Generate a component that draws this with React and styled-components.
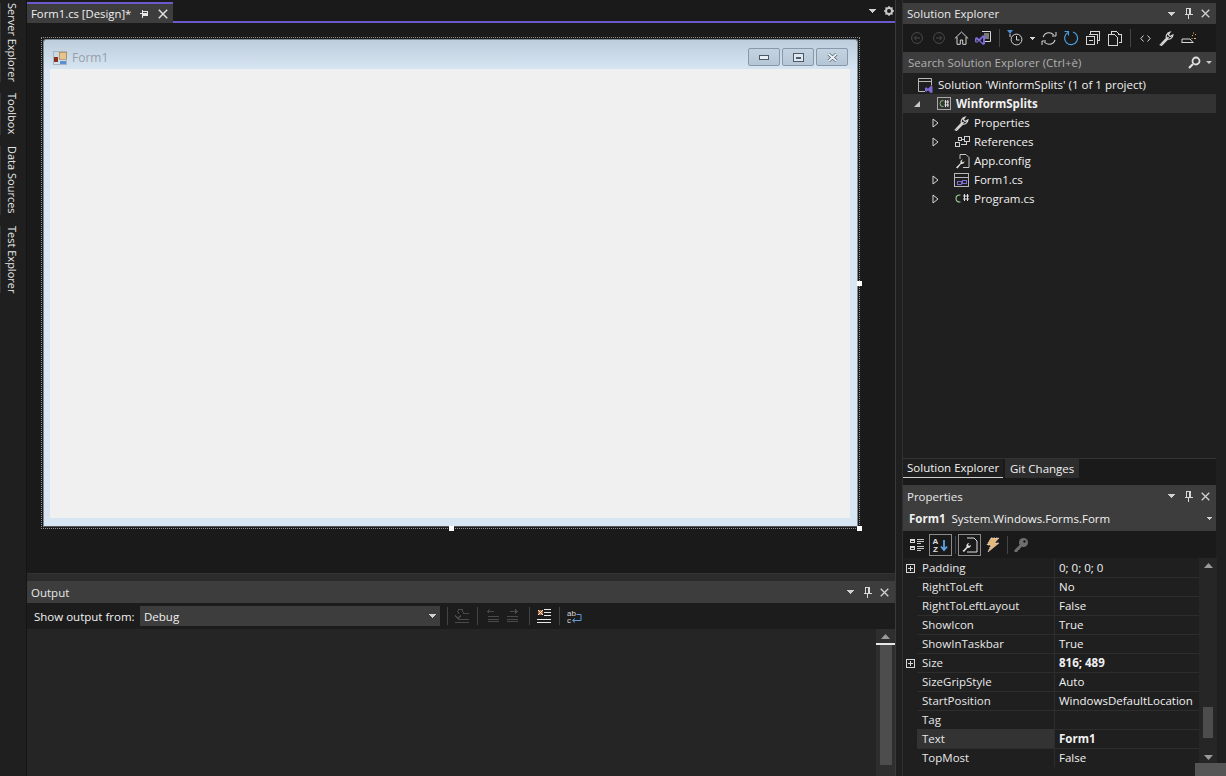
import React from "react";
import styled, { createGlobalStyle } from "styled-components";

const Global = createGlobalStyle`
  html, body { margin: 0; padding: 0; background: #1f1f1f; overflow: hidden; }
  * { box-sizing: border-box; }
`;

const Page = styled.div`
  width: 1226px; height: 776px; display: flex; position: relative; overflow: hidden;
  background: #1f1f1f; color: #f1f1f1;
  font-family: "Open Sans", "Liberation Sans", sans-serif; font-size: 11.5px; line-height: 19px;
`;
const Rail = styled.div`
  width: 27px; flex: none; display: flex; flex-direction: column; gap: 11px; background: #1f1f1f; padding-top: 3px;
  border-right: 1px solid #141414;
`;
const RailTab = styled.div`
  writing-mode: vertical-rl; height: ${p => p.$h}px; width: 21px; padding-left: 2px; font-size: 11px; line-height: 18px;
  color: #e6e6e6; border-left: 1px solid #333; white-space: nowrap;
`;
const Center = styled.div`
  width: 869px; flex: none; display: flex; flex-direction: column; border-right: 1px solid #3a3a3a;
`;
const DocStrip = styled.div`
  height: 23px; flex: none; display: flex; background: #1a1a1a; padding-top: 2px;
`;
const DocTab = styled.div`
  width: 146px; height: 21px; background: #3d3d3d; border-top: 2px solid #6a5acd; display: flex; align-items: center;
  padding-left: 4px; font-size: 11.3px; color: #f1f1f1; gap: 9px; white-space: nowrap;
`;
const DocRest = styled.div`
  flex: 1; display: flex; justify-content: flex-end; align-items: center; gap: 8px; padding: 0 1px 2px 0; height: 21px;
  border-bottom: 2px solid #6a5acd;
`;
const Designer = styled.div`
  height: 551px; flex: none; background: #1a1a1a; padding: 14px 0 0 14px; border-bottom: 1px solid #333;
`;
const Selection = styled.div`
  position: relative; width: 819px; height: 492px; border: 1px dotted #909090; padding: 1px;
`;
const Handle = styled.span`
  position: absolute; width: 5px; height: 5px; background: #fff; left: ${p => p.$x}px; top: ${p => p.$y}px;
`;
const FormWin = styled.div`
  height: 100%; border-radius: 3px 3px 0 0; border: 1px solid #7a8894; border-bottom-color: #555; padding: 0 7px 8px 6px;
  background: linear-gradient(#bdcddc 0, #d8e6f3 30px, #d8e6f3 100%); display: flex; flex-direction: column;
`;
const TitleBar = styled.div`
  height: 29px; flex: none; display: flex; align-items: center; color: #96a0a9; font-size: 12px; gap: 5px; padding: 6px 0 0 3px;
`;
const WinBtns = styled.div`
  margin-left: auto; display: flex; gap: 2px; margin-right: 2px; margin-top: 2px; align-self: flex-start;
`;
const WinBtn = styled.div`
  width: 32px; height: 18px; border: 1px solid #8898a8; border-radius: 2px;
  background: linear-gradient(#c4d3e1, #b5c6d6); display: flex; align-items: center; justify-content: center;
`;
const Client = styled.div` flex: 1; background: #f0f0f0; `;

const Band = styled.div` height: 7px; flex: none; background: #2b2b2b; `;
const PanelHead = styled.div`
  height: ${p => p.$h || 22}px; flex: none; background: #3d3d3d; display: flex; align-items: center; padding: 0 6px 0 4px; font-size: 11.5px; color: #e8e8e8;
`;
const HeadTools = styled.div`
  margin-left: auto; display: flex; align-items: center; gap: 8px;
  & > :first-child { margin-right: 1px; }
`;
const OutBar = styled.div`
  height: 26px; flex: none; background: #1c1c1c; display: flex; align-items: center; padding-left: 7px; font-size: 11.5px;
`;
const OutLabel = styled.span` width: 106px; flex: none; white-space: nowrap; color: #f1f1f1; `;
const Combo = styled.div`
  width: 300px; height: 20px; flex: none; background: #3d3d3d; display: flex; align-items: center; justify-content: space-between; padding: 0 4px; color: #f1f1f1;
`;
const ToolGlyph = styled.span`
  width: ${p => p.$w || 22}px; height: 22px; flex: none; display: inline-flex; align-items: center; justify-content: center;
`;
const Sep = styled.span`
  width: ${p => p.$w || 8}px; flex: none; height: 18px; display: inline-flex; justify-content: center;
  &::before { content: ""; width: 1px; height: 100%; background: #444; }
`;
const OutBody = styled.div`
  flex: 1; background: #252525; display: flex; justify-content: flex-end; min-height: 0;
`;
const OutScroll = styled.div`
  width: 19px; background: #2e2e2e; display: flex; flex-direction: column; align-items: center; padding-top: 5px;
`;
const OutMark = styled.div` width: 19px; height: 2px; background: #e8e8e8; margin-top: 4px; `;
const OutThumb = styled.div` width: 12px; height: 120px; background: #4d4d4d; `;

const Right = styled.div`
  margin-left: 6px; width: 314px; flex: none; display: flex; flex-direction: column; padding-top: 3px; border-left: 1px solid #303030;
`;
const SeTools = styled.div`
  height: 28px; flex: none; background: #1a1a1a; display: flex; align-items: center; padding-left: 3px;
`;
const Search = styled.div`
  height: 21px; flex: none; background: #3d3d3d; display: flex; align-items: center; justify-content: space-between; padding: 0 3px 0 5px; color: #b0b0b0; font-size: 11.5px;
`;
const Tree = styled.div` flex: 1; padding-top: 2px; background: #1f1f1f; border-bottom: 1px solid #333; min-height: 0; `;
const TreeRow = styled.div`
  height: 19px; display: flex; align-items: center; padding-left: ${p => p.$pad}px; white-space: nowrap; color: #f1f1f1;
  background: ${p => p.$sel ? "#333333" : "transparent"}; font-weight: ${p => p.$sel ? 700 : 400};
`;
const Expander = styled.span`
  width: 18px; flex: none; display: inline-flex; justify-content: center; margin-right: 10px;
`;
const TreeIcon = styled.span`
  width: 16px; height: 16px; flex: none; margin-right: 4px; display: inline-flex; align-items: center; justify-content: center;
`;
const Tabs = styled.div` height: 26px; flex: none; display: flex; gap: 2px; background: #1a1a1a; align-items: flex-start; `;
const TabItem = styled.div`
  height: 19px; padding: 0 5px 1px 4px; font-size: 11.5px; display: flex; align-items: center; white-space: nowrap;
  width: ${p => p.$w}px; color: #f1f1f1; background: ${p => p.$on ? "#1f1f1f" : "#2d2d2d"};
  border-bottom: ${p => p.$on ? "1px solid #d0d0d0" : "none"};
  padding-left: ${p => p.$on ? 4 : 5}px;
`;
const PropSub = styled.div`
  height: 24px; flex: none; background: #3d3d3d; display: flex; align-items: center; justify-content: space-between; padding: 0 4px 2px 6px; white-space: nowrap; color: #f1f1f1;
  b { margin-right: 6px; }
`;
const PropTools = styled.div`
  height: 27px; flex: none; background: #1a1a1a; display: flex; align-items: center; padding-left: 3px;
`;
const PropBtn = styled.span`
  width: ${p => p.$w || 23}px; height: 22px; flex: none; display: inline-flex; align-items: center; justify-content: center;
  border: 1px solid ${p => p.$on ? "#8a8a8a" : "transparent"};
`;
const PropWrap = styled.div` display: flex; flex: none; height: 209px; `;
const PropGrid = styled.div` width: 296px; flex: none; `;
const PropRow = styled.div`
  height: 19px; display: grid; grid-template-columns: 14px 138px 1fr; background: #1f1f1f;
`;
const PropGutter = styled.span` display: flex; align-items: center; justify-content: center; background: #1f1f1f; `;
const PropName = styled.span`
  padding-left: 4px; padding-top: 1px; color: #e8e8e8; border-right: 1px solid #2d2d2d; border-bottom: 1px solid #2d2d2d; background: ${p => p.$hl ? "#333333" : "transparent"}; line-height: 18px; white-space: nowrap; text-indent: 1px;
`;
const PropVal = styled.span`
  padding-left: 4px; padding-top: 1px; color: #f1f1f1; font-weight: ${p => p.$b ? 700 : 400}; line-height: 18px; white-space: nowrap; overflow: hidden; border-bottom: 1px solid #2d2d2d;
`;
const PropScroll = styled.div`
  width: 18px; flex: none; background: #262626; display: flex; flex-direction: column; align-items: center; padding: 5px 0 7px;
`;
const PropThumb = styled.div` width: 10px; height: 31px; background: #4d4d4d; margin: auto 0 17px; `;
const Foot = styled.div` height: 9px; flex: none; background: #1f1f1f; `;
const Grip = styled.div`
  position: absolute; right: 0; bottom: 0; width: 31px; height: 13px; background: #555;
`;

const Svg = ({ w = 16, h = 16, children }) => (
  <svg width={w} height={h} viewBox={`0 0 ${w} ${h}`} fill="none" shapeRendering="crispEdges">{children}</svg>
);
const Arrow = ({ c = "#d0d0d0" }) => (
  <Svg w={7} h={4}><path d="M0 0h7v1H6v1H5v1H4v1H3V3H2V2H1V1H0z" fill={c} /></Svg>
);
const Pin = ({ c = "#d8d8d8" }) => (
  <Svg w={9} h={11}><path d="M2.5.5h4v6h-4zM.5 6.5h8M4.5 7v4" stroke={c} /><path d="M5 1h1v5H5z" fill={c} /></Svg>
);
const Close = ({ c = "#d0d0d0", s = 9 }) => (
  <svg width={s} height={s} viewBox="0 0 10 10"><path d="M.8.8l8.4 8.4M9.2.8L.8 9.2" stroke={c} strokeWidth="1.5" /></svg>
);
const HTools = () => (
  <HeadTools><Arrow /><Pin /><Close /></HeadTools>
);
const Tri = () => (
  <svg width="7" height="10" viewBox="0 0 7 10"><path d="M1 1l5 4-5 4z" stroke="#d8d8d8" fill="none" /></svg>
);
const TriOpen = () => (
  <svg width="8" height="8" viewBox="0 0 8 8"><path d="M7 1v6H1z" fill="#c8c8c8" /></svg>
);
const Plus = () => (
  <Svg w={9} h={9}><path d="M.5.5h8v8h-8zM2 4.5h5M4.5 2v5" stroke="#d8d8d8" /></Svg>
);
const FormIcon = () => (
  <Svg><path d="M.5 1.5h14v13H.5zM1 5h13" stroke="#b8b8b8" /><path d="M3.5 9.5h4v3h-4zM8.5 8.5h4v3h-4z" stroke="#7d6bd8" /></Svg>
);
const Wrench = ({ c = "#d8d8d8" }) => (
  <svg width="16" height="16" viewBox="0 0 16 16"><path d="M1.2 14.8l6.3-6.6c-.8-2 0-5.5 3.6-6.1L9.3 4.6l1.9 1.9 2.7-1.6c-.3 3.3-3 4.6-5.1 4.1l-6.2 6.4z" fill="none" stroke={c} strokeWidth="1.2" /><path d="M9 6.4l1 1-6.6 6.7-1-1z" fill={c} /></svg>
);
const Sharp = ({ x, c = "#e0e0e0" }) => (
  <path d={`M${x + 1.5} 1v7M${x + 4.500} 1v7M${x} 3h6M${x} 6h6`} stroke={c} />
);

const Dim = "#4a4a4a";
const Ic = "#d6d6d6";

const SeToolbar = () => (
  <SeTools>
    <ToolGlyph><svg width="12" height="12" viewBox="0 0 12 12"><circle cx="6" cy="6" r="5.4" stroke={Dim} fill="none" /><path d="M9 6H3.5M5.5 3.8L3.3 6l2.2 2.2" stroke={Dim} fill="none" /></svg></ToolGlyph>
    <ToolGlyph><svg width="12" height="12" viewBox="0 0 12 12"><circle cx="6" cy="6" r="5.4" stroke={Dim} fill="none" /><path d="M3 6h5.500M6.500 3.800L8.700 6 6.500 8.200" stroke={Dim} fill="none" /></svg></ToolGlyph>
    <ToolGlyph><svg width="15" height="14" viewBox="0 0 15 14"><path d="M.8 7.5L7.5 1l6.7 6.5M3 6v7.3h3.3V9h2.4v4.3H12V6" stroke={Ic} fill="none" /></svg></ToolGlyph>
    <ToolGlyph><svg width="18" height="16" viewBox="0 0 18 16"><path d="M8 1.5h8.5v10H11" stroke={Ic} fill="none" /><path d="M10 4h5M10 6h5M10 8h5" stroke={Ic} /><path d="M1 8l2-1 2 2 4-4 2 1v8l-2 1-4-4-2 2-2-1zM2.5 9.2v3l1.5-1.5zM9 7.5L6.3 10.7 9 13z" fill="#7d6bd8" fillRule="evenodd" /></svg></ToolGlyph>
    <Sep $w={10} />
    <ToolGlyph><svg width="16" height="16" viewBox="0 0 16 16"><path d="M0 0h6L3 4z" fill="#4a90d9" /><circle cx="9.5" cy="9.5" r="5.4" stroke={Ic} fill="none" /><path d="M9.5 6v4h3M3 4v3" stroke={Ic} fill="none" /></svg></ToolGlyph>
    <ToolGlyph $w={12}><Svg w={5} h={3}><path d="M0 0h5v1H4v1H3v1H2V2H1V1H0z" fill={Ic} /></Svg></ToolGlyph>
    <ToolGlyph><svg width="16" height="15" viewBox="0 0 16 15"><path d="M2.2 6.2C3 3.2 5.300 1.800 8 1.800c2 0 3.500.8 4.800 2.200M14 8.800c-.8 3-3.300 4.400-6 4.400-2 0-3.500-.8-4.800-2.200" stroke={Ic} fill="none" strokeWidth="1.1" /><path d="M15 1v4h-4M1 14v-4h4" stroke={Ic} fill="none" /></svg></ToolGlyph>
    <ToolGlyph><svg width="16" height="16" viewBox="0 0 16 16"><path d="M5 2.500A6.500 6.500 0 1 0 10 2" stroke="#4a9fe0" fill="none" strokeWidth="1.200" /><path d="M1.500 1.500H5.500V5.500" stroke="#4a9fe0" fill="none" strokeWidth="1.100" /></svg></ToolGlyph>
    <ToolGlyph><Svg w={14} h={14}><path d="M4.500 3.500v-3h9v9h-3M2.500 3.500h9v9" stroke={Ic} /><path d="M.5 5.500h8v8h-8zM2.500 9.500h4" stroke={Ic} /></Svg></ToolGlyph>
    <ToolGlyph><Svg w={14} h={15}><path d="M3.500 3.500v-3h5l2 2h-1M.5 3.500h6l3 3v8h-9z" stroke={Ic} /><path d="M10 3.500h3.500v8h-3" stroke={Ic} /></Svg></ToolGlyph>
    <Sep />
    <ToolGlyph><svg width="11" height="7" viewBox="0 0 11 7"><path d="M3.500 .5L.8 3.500l2.700 3M7.500 .5l2.700 3-2.700 3" stroke={Ic} fill="none" /></svg></ToolGlyph>
    <ToolGlyph><Wrench /></ToolGlyph>
    <ToolGlyph><svg width="16" height="12" viewBox="0 0 16 12"><path d="M.5 10.500h12M1 10V7h8l3 3.500" stroke={Ic} fill="none" /><path d="M11 3h1v1h-1zM14 2h1v1h-1zM13 6h2v1h-2zM10.500 6h1v1h-1zM12 .5h1v1h-1z" fill="#e4b070" /></svg></ToolGlyph>
  </SeTools>
);

const OutputTools = () => (
  <>
    <Sep $w={14} />
    <ToolGlyph $w={16}><Svg w={14} h={14}><path d="M3 4.500V2.500q0-2 2-2h1q2 0 2 2v1M0 6.500L3 9.500 6 6.500M8 4.500h6M3 10.500h12M0 13.500h14" stroke={Dim} /></Svg></ToolGlyph>
    <Sep $w={14} />
    <ToolGlyph $w={18}><Svg w={14} h={14}><path d="M1 2.500h7M3.500 .5l-2 2 2 2M2 7.500h11M2 10h11M2 12.500h11" stroke={Dim} /></Svg></ToolGlyph>
    <ToolGlyph $w={20}><Svg w={14} h={14}><path d="M5 2.500h7M10 .5l2 2-2 2M2 7.500h11M2 10h11M2 12.500h11" stroke={Dim} /></Svg></ToolGlyph>
    <Sep $w={14} />
    <ToolGlyph $w={16}><Svg w={15} h={15}><path d="M7 .5h7M7 3.500h7M7 6.500h7M0 10.500h14M0 13.500h14" stroke="#e8e8e8" /><path d="M1 1h5v5H1z" fill="#b06030" /><path d="M1 1l5 5M6 1L1 6" stroke="#e8e8e8" /></Svg></ToolGlyph>
    <Sep $w={14} />
    <ToolGlyph $w={16}><svg width="15" height="15" viewBox="0 0 15 15"><text x="0" y="7" fill="#d8d8d8" fontSize="8" fontFamily="Liberation Sans">ab</text><text x="0" y="14" fill="#d8d8d8" fontSize="8" fontFamily="Liberation Sans">c</text><path d="M9.500 5.500h4.500v6H6M8 9.500l-2.500 2L8 13.500" stroke="#5b9be0" fill="none" /></svg></ToolGlyph>
  </>
);

const PropToolbar = () => (
  <PropTools>
    <PropBtn><Svg w={15} h={14}><path d="M0 1h5v4H0zM0 8h5v4H0z" fill="#d8d8d8" /><path d="M1 3h3M1 10h3" stroke="#1a1a1a" /><path d="M7 1.500h7M7 3.500h7M7 5.500h4M7 8.500h7M7 10.500h7M7 12.500h4" stroke="#c8c8c8" /></Svg></PropBtn>
    <PropBtn $on><svg width="17" height="16" viewBox="0 0 17 16"><text x="0.500" y="7" fontSize="8" fontWeight="700" fill="#e0e0e0" fontFamily="Liberation Sans">A</text><text x="1" y="15" fontSize="8" fontWeight="700" fill="#e0e0e0" fontFamily="Liberation Sans">Z</text><path d="M12 3v10M9 9.500l3 3.500 3-3.500" stroke="#5aa6e6" strokeWidth="1.800" fill="none" /></svg></PropBtn>
    <Sep $w={6} />
    <PropBtn $on><svg width="17" height="16" viewBox="0 0 17 16"><path d="M6 1h7l3 3v11H6" stroke="#e0e0e0" fill="none" /><path d="M1.500 14l4-4c-.5-2 .5-4 3-4L7 7.500 8 9l2-1c0 2-2 3.500-3.500 3l-3.500 4z" fill="#e0e0e0" /></svg></PropBtn>
    <PropBtn $w={22}><svg width="15" height="16" viewBox="0 0 15 16"><path d="M6 1h8L9.500 6H14L3 15l3-7H2z" fill="#e8b878" stroke="#e8e8e8" strokeWidth=".8" strokeDasharray="1.500 1" /></svg></PropBtn>
    <Sep $w={8} />
    <PropBtn $w={20}><svg width="16" height="16" viewBox="0 0 16 16"><circle cx="10.500" cy="5.500" r="4.500" fill="#6e6e6e" /><circle cx="11.500" cy="4.500" r="1.200" fill="#1a1a1a" /><path d="M7.500 7L1.500 13v2H4l1-1v-1h1.500V12L9 9.500z" fill="#6e6e6e" /></svg></PropBtn>
  </PropTools>
);

const props = [
  ["Padding", "0; 0; 0; 0", { plus: true }],
  ["RightToLeft", "No"],
  ["RightToLeftLayout", "False"],
  ["ShowIcon", "True"],
  ["ShowInTaskbar", "True"],
  ["Size", "816; 489", { plus: true, b: true }],
  ["SizeGripStyle", "Auto"],
  ["StartPosition", "WindowsDefaultLocation"],
  ["Tag", ""],
  ["Text", "Form1", { b: true, hl: true }],
  ["TopMost", "False"],
];

export default function App() {
  return (
    <Page>
      <Global />
      <Rail>
        <RailTab $h={79}>Server Explorer</RailTab>
        <RailTab $h={42}>Toolbox</RailTab>
        <RailTab $h={69}>Data Sources</RailTab>
        <RailTab $h={67}>Test Explorer</RailTab>
      </Rail>
      <Center>
        <DocStrip>
          <DocTab>
            Form1.cs [Design]*
            <Svg w={9} h={9}><path d="M0 4.500h2M2.500 2.500h5v4h-5zM2.500 .5v8" stroke="#e8e8e8" /><path d="M3 4h5v2H3z" fill="#e8e8e8" /></Svg>
            <Close c="#e0e0e0" s={10} />
          </DocTab>
          <DocRest>
            <Arrow />
            <svg width="10" height="10" viewBox="0 0 10 10"><circle cx="5" cy="5" r="3" fill="none" stroke="#c8c8c8" strokeWidth="2" /><path d="M5 0v2M5 8v2M0 5h2M8 5h2M1.500 1.500l1.500 1.500M7 7l1.500 1.500M8.500 1.500L7 3M3 7L1.500 8.500" stroke="#c8c8c8" strokeWidth="1.300" /></svg>
          </DocRest>
        </DocStrip>
        <Designer>
          <Selection>
            <FormWin>
              <TitleBar>
                <svg width="14" height="14" viewBox="0 0 14 14" shapeRendering="crispEdges"><path d="M.5.500h13v13H.5z" stroke="#a8b4be" fill="none" /><path d="M6 1h7v7H6z" fill="#e8c48c" stroke="#a87838" strokeWidth=".6" /><path d="M1 6h4v5H1z" fill="#8a3020" /><path d="M7 10h6v3H7z" fill="#5a90d0" /></svg>
                Form1
                <WinBtns>
                  <WinBtn><Svg w={10} h={5}><path d="M.5.500h9v4h-9z" fill="#e8eef4" stroke="#4c5a68" /></Svg></WinBtn>
                  <WinBtn><Svg w={11} h={9}><path d="M.5.500h10v8H.5z" stroke="#4c5a68" fill="#dfe8f0" /><path d="M3 3.500h5v2H3z" fill="#4c5a68" /></Svg></WinBtn>
                  <WinBtn><svg width="11" height="9" viewBox="0 0 11 9"><path d="M1.500 1l8 7M9.500 1l-8 7" stroke="#4c5a68" strokeWidth="3.200" /><path d="M1.500 1l8 7M9.500 1l-8 7" stroke="#eef3f7" strokeWidth="1.800" /></svg></WinBtn>
                </WinBtns>
              </TitleBar>
              <Client />
            </FormWin>
            <Handle $x={815} $y={243} />
            <Handle $x={407} $y={488} />
            <Handle $x={815} $y={488} />
          </Selection>
        </Designer>
        <Band />
        <PanelHead>Output<HTools /></PanelHead>
        <OutBar>
          <OutLabel>Show output from:</OutLabel>
          <Combo>Debug<Arrow /></Combo>
          <OutputTools />
        </OutBar>
        <OutBody>
          <OutScroll>
            <svg width="9" height="5" viewBox="0 0 9 5"><path d="M4.500 0L9 5H0z" fill="#9a9a9a" /></svg>
            <OutMark />
            <OutThumb />
          </OutScroll>
        </OutBody>
      </Center>
      <Right>
        <PanelHead $h={21}>Solution Explorer<HTools /></PanelHead>
        <SeToolbar />
        <Search>
          Search Solution Explorer (Ctrl+è)
          <svg width="25" height="13" viewBox="0 0 25 13"><circle cx="8" cy="5" r="3.500" stroke="#e0e0e0" strokeWidth="1.800" fill="none" /><path d="M5 8L1 12" stroke="#e0e0e0" strokeWidth="2.200" /><path d="M18 5h6l-3 3z" fill="#c8c8c8" /></svg>
        </Search>
        <Tree>
          <TreeRow $pad={15}>
            <TreeIcon><svg width="16" height="16" viewBox="0 0 16 16"><path d="M7 14.500H.5v-13h13v7M1 4.500h12" stroke="#b8b8b8" fill="none" /><path d="M7 11l1.500-.8 1.500 1.500 3-3 1.500.8v6l-1.500.8-3-3-1.500 1.500L7 14z" fill="#7d6bd8" /></svg></TreeIcon>
            Solution 'WinformSplits' (1 of 1 project)
          </TreeRow>
          <TreeRow $pad={5} $sel>
            <Expander><TriOpen /></Expander>
            <TreeIcon><svg width="14" height="13" viewBox="0 0 14 13"><path d="M.5.500h13v12H.5z" stroke="#a8a8a8" fill="none" shapeRendering="crispEdges" /><path d="M6.500 3.500Q3 3 3 6.500T6.500 9.500" stroke="#7fc070" fill="none" /><path d="M8.500 3v7M10.800 3v7M7.500 5h4.500M7.500 8h4.500" stroke="#e0e0e0" /></svg></TreeIcon>
            WinformSplits
          </TreeRow>
          <TreeRow $pad={23}><Expander><Tri /></Expander><TreeIcon><Wrench /></TreeIcon>Properties</TreeRow>
          <TreeRow $pad={23}><Expander><Tri /></Expander><TreeIcon><Svg w={15} h={11}><path d="M.5 6.500h4v4h-4zM9.500.5h5v5h-5zM3.500 1.500h3v3h-3zM6 8.500h5M11.500 5v3.500M6.500 3h3" stroke="#d0d0d0" /></Svg></TreeIcon>References</TreeRow>
          <TreeRow $pad={23}><Expander /><TreeIcon><svg width="15" height="16" viewBox="0 0 15 16"><path d="M5 1.500h6l3 3v10H8M5 1.500V6" stroke="#c8c8c8" fill="none" /><path d="M1 14.500l4.500-4.500c-.5-2 .5-3.500 2.500-3.500L6.500 8 8 9.500l1.500-1.500c0 2-1.500 3.500-3.500 3L2.500 15.500z" fill="#e0e0e0" /></svg></TreeIcon>App.config</TreeRow>
          <TreeRow $pad={23}><Expander><Tri /></Expander><TreeIcon><FormIcon /></TreeIcon>Form1.cs</TreeRow>
          <TreeRow $pad={23}><Expander><Tri /></Expander><TreeIcon><svg width="16" height="12" viewBox="0 0 16 12"><path d="M6.500 2Q2 1.800 2 5.500T6.500 9" stroke="#9fce90" fill="none" strokeWidth="1.100" /><Sharp x={9} /></svg></TreeIcon>Program.cs</TreeRow>
        </Tree>
        <Tabs>
          <TabItem $on $w={100}>Solution Explorer</TabItem>
          <TabItem $w={74}>Git Changes</TabItem>
        </Tabs>
        <PanelHead $h={22}>Properties<HTools /></PanelHead>
        <PropSub>
          <span><b>Form1</b>System.Windows.Forms.Form</span>
          <Svg w={5} h={3}><path d="M0 0h5v1H4v1H3v1H2V2H1V1H0z" fill="#d0d0d0" /></Svg>
        </PropSub>
        <PropToolbar />
        <PropWrap>
          <PropGrid>
            {props.map(([n, v, o = {}]) => (
              <PropRow key={n}>
                <PropGutter>{o.plus && <Plus />}</PropGutter>
                <PropName $hl={o.hl}>{n}</PropName>
                <PropVal $b={o.b}>{v}</PropVal>
              </PropRow>
            ))}
          </PropGrid>
          <PropScroll>
            <svg width="9" height="5" viewBox="0 0 9 5"><path d="M4.500 0L9 5H0z" fill="#9a9a9a" /></svg>
            <PropThumb />
            <svg width="9" height="5" viewBox="0 0 9 5"><path d="M0 0h9L4.500 5z" fill="#9a9a9a" /></svg>
          </PropScroll>
        </PropWrap>
        <Foot />
      </Right>
      <Grip />
    </Page>
  );
}
